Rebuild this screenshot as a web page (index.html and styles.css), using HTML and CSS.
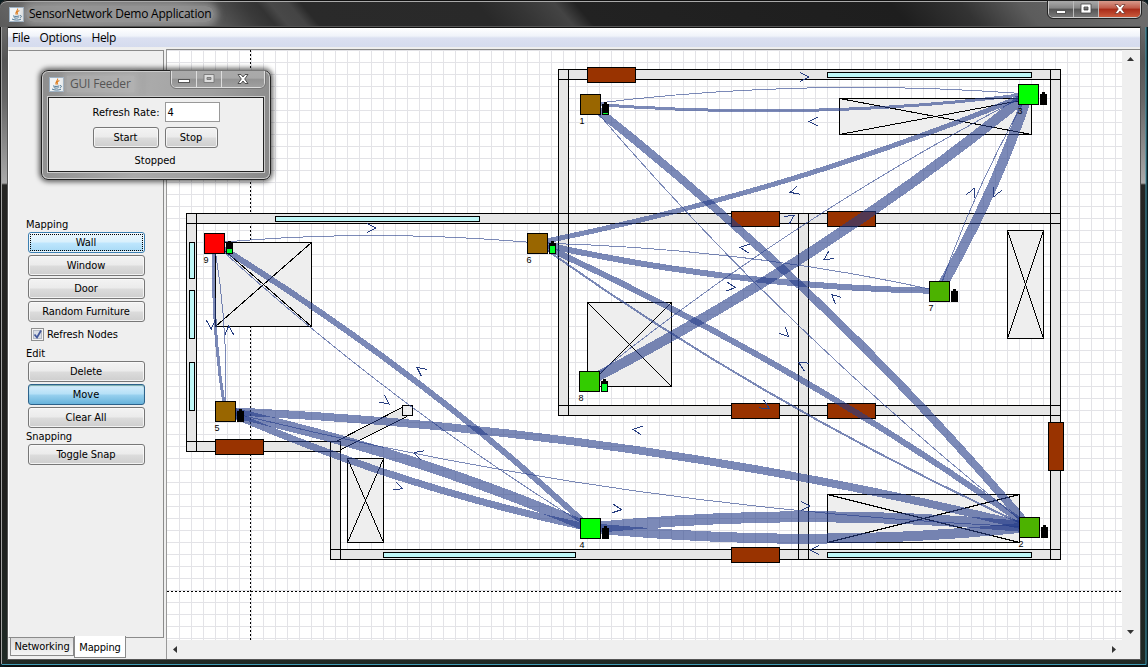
FILE: index.html
```html
<!DOCTYPE html>
<html lang="en">
<head>
<meta charset="utf-8">
<title>SensorNetwork Demo Application</title>
<link rel="stylesheet" href="styles.css">
</head>
<body>
<svg width="0" height="0" class="defs">
  <symbol id="java" viewBox="0 0 15 15">
    <rect x=".5" y=".5" width="14" height="14" fill="#f1f4f6" stroke="#9eb2c4"/>
    <path d="M8.6 1.5C9.6 3.6 5.4 4.6 7.3 7.8M10.4 3.6C7.6 4.8 7.9 5.7 8.9 7.6" fill="none" stroke="#e08024" stroke-width="1.1"/>
    <path d="M4 8.8C5 9.6 9 9.6 10.4 8.8M4.8 10.6C6 11.3 8.6 11.3 9.6 10.6M3 12C5 13.4 10 13.4 12 12.2M11 8.6C13.4 8.4 12.4 10.6 10.8 10.8" fill="none" stroke="#4b7593" stroke-width="1"/>
  </symbol>
</svg>
<div class="window">
  <header class="titlebar">
    <svg class="java" width="15" height="15"><use href="#java"/></svg>
    <span class="title">SensorNetwork Demo Application</span>
    <div class="caption">
      <span class="cap"><svg width="12" height="12"><rect x="1.5" y="7.5" width="9" height="3" fill="#fff" stroke="#555"/></svg></span>
      <span class="cap"><svg width="12" height="12"><path d="M1 1h10v9H1zM4 4v3h4V4z" fill="#fff" fill-rule="evenodd" stroke="#444" stroke-width=".8"/></svg></span>
      <span class="cap close"><svg width="12" height="12"><path d="M1 1.5h3L6 4l2-2.500h3L7.700 6l3.300 4.500H8L6 8l-2 2.500H1L4.300 6z" fill="#fff" stroke="#6a3028" stroke-width=".7"/></svg></span>
    </div>
  </header>
  <div class="client">
    <nav class="menubar"><span>File</span><span>Options</span><span>Help</span></nav>
    <div class="body">
      <aside class="side">
        <div class="panel">
          <div class="label">Mapping</div>
          <div class="btn focus">Wall</div>
          <div class="btn">Window</div>
          <div class="btn">Door</div>
          <div class="btn">Random Furniture</div>
          <div class="check"><svg width="13" height="13"><rect x=".5" y=".5" width="12" height="12" fill="#f4f4f4" stroke="#8e8f8f"/><rect x="2.500" y="2.500" width="8" height="8" fill="#d9dee6" stroke="#b4bac4"/><path d="M3.500 6.500L6 9.500L10 2.500" fill="none" stroke="#43599c" stroke-width="1.800"/></svg>Refresh Nodes</div>
          <div class="label edit">Edit</div>
          <div class="btn">Delete</div>
          <div class="btn pressed">Move</div>
          <div class="btn">Clear All</div>
          <div class="label snap">Snapping</div>
          <div class="btn">Toggle Snap</div>
        </div>
        <div class="tabs"><span class="tab">Networking</span><span class="tab active">Mapping</span></div>
      </aside>
      <main class="view">
        <svg id="plan" width="955" height="590" viewBox="167 50 955 590"></svg>
        <div class="vscroll">
          <svg width="7" height="4"><path d="M0 4L3.500 0L7 4z" fill="#333"/></svg>
          <svg width="7" height="4"><path d="M0 0L3.500 4L7 0z" fill="#333"/></svg>
        </div>
        <div class="hscroll">
          <svg width="4" height="7"><path d="M4 0L0 3.500L4 7z" fill="#333"/></svg>
          <svg width="4" height="7"><path d="M0 0L4 3.500L0 7z" fill="#333"/></svg>
        </div>
      </main>
    </div>
  </div>
</div>
<section class="dialog">
  <header class="dialog-bar">
    <svg class="java" width="15" height="15"><use href="#java"/></svg>
    <span class="dialog-title">GUI Feeder</span>
    <div class="caption light">
      <span class="cap"><svg width="12" height="12"><rect x=".5" y="6.500" width="11" height="3" fill="#fff" stroke="#555"/></svg></span>
      <span class="cap"><svg width="12" height="12"><path d="M1 1.500h10v8H1zM4 4.500v2h4v-2z" fill="#ddd" fill-rule="evenodd" stroke="#777" stroke-width=".9"/></svg></span>
      <span class="cap"><svg width="12" height="12"><path d="M1 1.500h3L6 4l2-2.500h3L7.700 6l3.300 4.500H8L6 8l-2 2.500H1L4.300 6z" fill="#fff" stroke="#444" stroke-width=".9"/></svg></span>
    </div>
  </header>
  <div class="dialog-body">
    <div class="row rate"><span>Refresh Rate:</span><span class="field">4</span></div>
    <div class="row"><div class="btn start">Start</div><div class="btn stop">Stop</div></div>
    <div class="row status">Stopped</div>
  </div>
</section>
<script src="plan.js"></script>
</body>
</html>
```
FILE: styles.css
```css
* { box-sizing: border-box; }
body {
  margin: 0; width: 1148px; height: 667px; overflow: hidden; background: #0b1a1e;
  font: 11px "DejaVu Sans Condensed", "Noto Sans", sans-serif; letter-spacing: -.05px; color: #000;
}
.defs { position: absolute; }
svg { display: block; }
.window {
  height: 667px; padding: 0 8px 8px; display: flex; flex-direction: column;
  border-radius: 7px;
  background:
    linear-gradient(#0000 664px, #3f9bb5 664px, #3f9bb5 665px, #0a0f10 665px),
    linear-gradient(90deg, #111 0, #111 1px, #aaa 1px, #999 2px, #0000 2px, #0000 1145px, #3d96ac 1146px, #0c1c20 1147px),
    linear-gradient(#777 0, #555 60px, #666 100px, #aaa 183px, #252523 185px, #20201e 500px, #1f2925 100%);
}
.titlebar {
  height: 27px; margin: 0 -8px; display: flex; align-items: flex-start; border-radius: 7px 7px 0 0;
  border-top: 1px solid #111; box-shadow: inset 0 1px #aaa;
  background: linear-gradient(50deg, #5a5a5a 0, #777 60px, #6c6c6c 150px, #3a3a3a 200px, #333 212px, #484848 222px, #444 236px, #2a2a2a 246px, #292929 380px, #353535 410px, #444 440px, #222 456px, #1e1e1e 697px, #333 751px, #5c5c5c 797px, #6b6b6b 870px);
}
.titlebar .java { margin: 6px 0 0 9px; }
.title {
  font: 12px/16px "Open Sans", "Noto Sans", sans-serif; letter-spacing: -.22px; margin: 5px 0 0 2px; padding: 0 3px;
  background: #aaa9; box-shadow: 0 0 7px 4px #aaa9; border-radius: 8px; white-space: nowrap;
}
.caption { display: flex; margin-left: auto; border: 1px solid #ccc; border-top: 0; border-radius: 0 0 5px 5px; height: 17px; overflow: hidden; }
.titlebar .caption { margin-right: 7px; outline: 1px solid #222; }
.cap { width: 25px; display: flex; align-items: center; justify-content: center; background: linear-gradient(#999, #777 45%, #444 50%, #686868); border-right: 1px solid #bbb; }
.titlebar .cap { background: linear-gradient(#aaa, #858585 45%, #555 50%, #787878); }
.titlebar .close { width: 41px; border: 0; background: linear-gradient(#d99a8c, #c05a48 45%, #a82a18 50%, #ca5a3c); }
.client { flex: 1; border-top: 1px solid #111; display: flex; flex-direction: column; background: #efefef; outline: 1px solid #555; }
.menubar {
  height: 19px; display: flex; gap: 10px; padding-left: 4px; font: 12px/19px "Open Sans", "Noto Sans", sans-serif; letter-spacing: -.35px;
  background: linear-gradient(#fff 0, #f0f3fa 8px, #dbe0f1 10px, #d5dbee 100%);
}
.body { flex: 1; display: flex; border-top: 1px solid #eee; }
.side { width: 159px; display: flex; flex-direction: column; background: #efefef; padding-top: 2px; }
.panel { width: 156px; height: 588px; border: 1px solid #8b8b8b; border-left-color: #fff; padding: 166px 0 0 19px; }
.label { height: 15px; line-height: 15px; margin-left: -2px; }
.btn {
  width: 117px; height: 21px; margin-bottom: 2px; border: 1px solid #777; border-radius: 3px; line-height: 19px; text-align: center; padding-right: 1px;
  background: linear-gradient(#f3f3f3, #ebebeb 48%, #dcdcdc 52%, #cecece); box-shadow: inset 0 0 0 1px #fafafacc;
}
.focus { border-color: #3c7fb1; background: linear-gradient(#eaf6fd, #d9f0fc 48%, #bee6fd 52%, #a7d9f5); outline: 1px dotted #000; outline-offset: -3px; }
.pressed { border-color: #2c628b; background: linear-gradient(#d6eefb, #b5e0f7 48%, #98d1ef 52%, #68b3db); box-shadow: inset 0 1px 1px #7aa; }
.check { display: flex; align-items: center; gap: 3px; height: 20px; padding-left: 3px; margin-bottom: 2px; }
.edit { line-height: 15px; height: 15px; }
.snap { height: 14px; line-height: 13px; }
.tabs { display: flex; align-items: flex-start; padding-left: 2px; margin-top: -1px; }
.tab { height: 19px; width: 64px; border: 1px solid #8b8b8b; text-align: center; background: linear-gradient(#ddd, #f4f4f4); line-height: 17px; letter-spacing: -.15px; }
.active { width: 52px; height: 22px; margin-top: -1px; background: #fff; border-top: 0; line-height: 24px; }
.view { flex: 1; display: grid; grid-template-columns: 955px 18px; grid-template-rows: 590px 18px; border-left: 1px solid #999; border-top: 1px solid #888; margin-top: 1px; background: #efefef; }
#plan { background: #fff; }
.vscroll { display: flex; flex-direction: column; justify-content: space-between; align-items: center; padding: 7px 1px 6px 0; }
.hscroll { display: flex; justify-content: space-between; align-items: center; padding: 0 6px 0 6px; }
.link { fill: none; stroke: #253c89; stroke-opacity: .6; }
.arrow { fill: none; stroke: #253c80; }
.grid { stroke: #e3e3e7; }
.axis { stroke: #000; stroke-dasharray: 2 2; }
.wall { fill: #e6e6e6; stroke: none; }
.outline { fill: none; stroke: #000; }
.furniture { fill: #eee; stroke: #000; }
.pane { fill: #bff7f7; stroke: #000; }
.door { fill: #993300; stroke: #000; }
.node { stroke: #000; }
.node-label { font: 9px "Liberation Sans", sans-serif; letter-spacing: 0; }
.dialog {
  position: absolute; left: 41px; top: 70px; width: 230px; height: 110px; padding: 0 6px 7px;
  border: 1px solid #222; border-radius: 7px; background: linear-gradient(100deg, #8d8d8d, #aaa 45%, #a0a0a0 70%, #888);
  box-shadow: inset 0 0 0 1px #ccc, 0 0 5px 2px #0009;
  display: flex; flex-direction: column;
}
.dialog-bar { height: 26px; display: flex; align-items: flex-start; }
.dialog-bar .java { margin: 6px 0 0 1px; }
.dialog-title { font: 12px/16px "Open Sans", "Noto Sans", sans-serif; letter-spacing: -.2px; color: #555; margin: 5px 0 0 3px; padding: 0 3px; background: #bbb8; box-shadow: 0 0 6px 3px #bbb8; }
.light .cap { background: linear-gradient(#aaa, #a8a8a8 45%, #939393 50%, #a0a0a0); border-color: #ddd; }
.light .cap:last-child { width: 42px; border: 0; }
.light { border-color: #ddd; outline: 1px solid #777; margin-right: -1px; }
.dialog-body { flex: 1; background: #efefef; border: 1px solid #222; outline: 1px solid #ccc; padding-top: 4px; }
.row { display: flex; justify-content: center; gap: 6px; padding-right: 1px; }
.rate { gap: 5px; height: 25px; line-height: 21px; letter-spacing: .05px; padding-right: 0; }
.field { width: 55px; height: 20px; background: #fff; border: 1px solid #999; padding-left: 2px; line-height: 19px; }
.start, .stop { line-height: 20px; }
.start { width: 66px; }
.stop { width: 53px; }
.status { line-height: 22px; padding-right: 2px; height: 20px; }
```
FILE: plan.js
```js
const svg = document.getElementById('plan');
function add(tag, cls, attrs, text) {
  const el = document.createElementNS('http://www.w3.org/2000/svg', tag);
  el.setAttribute('class', cls);
  for (const k in attrs) el.setAttribute(k, attrs[k]);
  if (text) el.textContent = text;
  svg.appendChild(el);
}
const crisp = 'crispEdges';
const box = (cls, [x1, y1, x2, y2]) =>
  add('rect', cls, { x: x1 + .5, y: y1 + .5, width: x2 - x1, height: y2 - y1 });
const path = (cls, d, extra) => add('path', cls, { d, 'shape-rendering': crisp, ...extra });

for (let x = 179; x < 1122; x += 12) path('grid', `M${x + .5} 50V640`);
for (let y = 50; y < 640; y += 12) path('grid', `M167 ${y + .5}H1122`);
path('axis', 'M250.5 50V640');
path('axis', 'M167 591.5H1122');

const walls = [
  [186, 213, 196, 451], [186, 213, 1060, 223], [186, 441, 340, 451], [330, 441, 340, 559],
  [330, 549, 1060, 559], [558, 69, 568, 415], [558, 69, 1060, 79], [1050, 69, 1060, 559],
  [558, 405, 1060, 415], [798, 213, 808, 559]
];
walls.forEach(w => box('wall', w));
path('wall', 'M336 441L402 407L407 417L341 449z');
path('outline', 'M336 441.500L402 407.500M341 449.500L407 416.500');
walls.forEach(w => box('outline', w));
box('furniture', [402, 405, 412, 415]);

[[215, 242, 311, 326], [839, 98, 1031, 134], [1007, 230, 1043, 338], [587, 302, 671, 386],
 [347, 458, 383, 542], [827, 494, 1019, 542]].forEach(f => {
  box('furniture', f);
  const [a, b, c, d] = f.map(v => v + .5);
  path('outline', `M${a} ${b}L${c} ${d}M${a} ${d}L${c} ${b}`);
});
[[827, 72, 1031, 77], [275, 216, 479, 221], [189, 242, 194, 278], [189, 290, 194, 338],
 [189, 362, 194, 410], [383, 552, 575, 557], [827, 552, 1031, 557]].forEach(p => box('pane', p));
[[587, 67, 635, 82], [731, 211, 779, 226], [827, 211, 875, 226], [731, 403, 779, 418],
 [827, 403, 875, 418], [731, 547, 779, 562], [215, 439, 263, 454], [1048, 422, 1063, 470]]
  .forEach(d => box('door', d));

// id: [left, top, colour, battery level in px]
const nodes = {
  1: [580, 94, '#996600', 1], 2: [1019, 517, '#4cb200', 0], 3: [1018, 84, '#00ff00', 0],
  4: [580, 518, '#00ff00', 0], 5: [215, 401, '#996600', 0], 6: [527, 233, '#996600', 7],
  7: [929, 281, '#4cb200', 0], 8: [579, 371, '#33cc00', 7], 9: [204, 233, '#ff0000', 4]
};
// from, to, control x, control y, stroke width
const links = [
  [1, 3, 804, 77, 1], [3, 1, 814, 121.500, 3], [3, 6, 795, 191, 5], [8, 3, 790, 218, 1],
  [3, 8, 828, 257, 10], [7, 6, 745, 248, 1], [6, 7, 730.500, 287, 6], [2, 1, 835.500, 298, 8],
  [1, 2, 785, 333, 1], [2, 6, 803, 365, 6], [6, 2, 765, 406, 2], [2, 5, 638, 430, 8],
  [5, 2, 616.500, 509, 1], [4, 2, 805, 506, 11], [2, 4, 815, 550, 10], [4, 5, 418.500, 454, 10],
  [5, 4, 398, 487, 7], [9, 4, 385, 401, 1], [4, 9, 421, 370.500, 6], [9, 6, 371, 228, 1],
  [9, 5, 211, 324, 3], [5, 9, 229, 331, 1], [7, 3, 972, 193, 1], [3, 7, 996, 192, 10]
];
links.forEach(([a, b, cx, cy, w]) => {
  const [x1, y1, x2, y2] = [nodes[a][0] + 10, nodes[a][1] + 10, nodes[b][0] + 10, nodes[b][1] + 10];
  path('link', `M${x1} ${y1}Q${cx} ${cy} ${x2} ${y2}`, { 'stroke-width': w });
  const angle = Math.atan2(y2 - y1, x2 - x1) * 180 / Math.PI;
  path('arrow', 'M-4 -4.500L5 0L-4 4.500', { transform: `translate(${cx} ${cy}) rotate(${angle})` });
});
for (const id in nodes) {
  const [x, y, fill, level] = nodes[id];
  add('rect', 'node', { x: x + .5, y: y + .5, width: 20, height: 20, fill });
  add('path', 'battery', { d: `M${x + 22} ${y + 10}h2v-2h3v2h2v11h-7z` });
  if (level) add('rect', 'level', { x: x + 23, y: y + 20 - level, width: 5, height: level, fill: '#00ff2a' });
  add('text', 'node-label', { x: x - .5, y: y + 29.500 }, id);
}
```
